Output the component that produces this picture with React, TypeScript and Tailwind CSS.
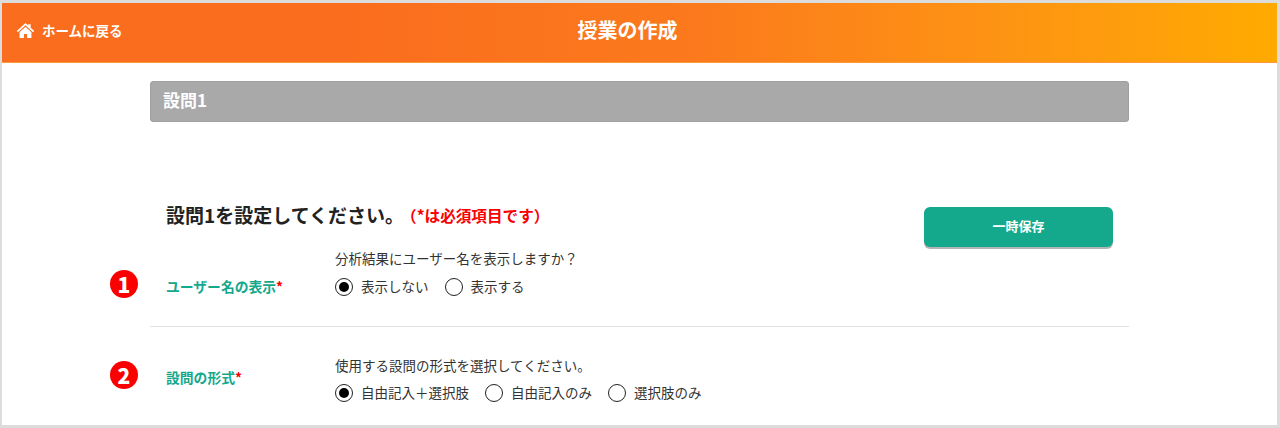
import React from "react";

const font = { fontFamily: '"Noto Sans CJK JP", "Noto Sans", sans-serif' };

function Radio({ checked, label }: { checked?: boolean; label: string }) {
  return (
    <span className="flex items-center gap-[8px]">
      <span className="flex h-[18px] w-[18px] items-center justify-center rounded-full border border-[#222] bg-white">
        {checked && <span className="h-[10px] w-[10px] rounded-full bg-black" />}
      </span>
      <span className="-mt-[2px] text-[13.5px] leading-[18px] text-[#333]">{label}</span>
    </span>
  );
}

function Row({ n, label, question, options, className, badgeTop, labelTop, radioTop }: { n: string; label: string; question: string; options: { label: string; checked?: boolean }[]; className: string; badgeTop: string; labelTop: string; radioTop: string }) {
  return (
    <div className={`flex items-start ${className}`}>
      <span className={`${badgeTop} flex h-[28px] w-[28px] shrink-0 items-center justify-center rounded-full bg-[#fa0000] text-[21px] font-black leading-none text-white`}>{n}</span>
      <span className={`${labelTop} ml-[28px] w-[170px] shrink-0 text-[13.8px] font-bold leading-[18px] text-[#14a88c]`}>
        {label}<span className="text-[#fa0000]">*</span>
      </span>
      <div className="-ml-[1px] flex flex-col">
        <p className="text-[13.5px] leading-[18px] text-[#333]">{question}</p>
        <div className={`${radioTop} flex items-center gap-[16px]`}>
          {options.map((o) => (
            <Radio key={o.label} label={o.label} checked={o.checked} />
          ))}
        </div>
      </div>
    </div>
  );
}

export default function App() {
  return (
    <div style={font} className="h-[428px] w-[1280px] overflow-hidden border-t-[3px] border-r-[3px] border-b-[3px] border-l-[2px] border-[#dcdcdc] bg-white">
      <header className="relative flex h-[60px] items-center justify-center border-b border-b-[#ff9a3c] bg-gradient-to-r from-[#fa6c1e] from-[25%] via-[#fb7a1c] via-[55%] to-[#ffaa00] pr-[24px]">
        <a className="absolute left-[14px] top-[16px] flex items-center gap-[7px] text-[13.5px] font-bold leading-[18px] text-white">
          <svg viewBox="0 0 24 24" width="19" height="19" fill="#fff" className="mt-[2px]">
            <path d="M12 2.5 1 12.6l1.5 1.6L12 5.5l9.5 8.7 1.5-1.6L18.5 8.5V4h-3v1.8z" />
            <path d="M12 7.4 4.5 14.2V21.5h5.5v-5h4v5h5.5v-7.3z" />
          </svg>
          ホームに戻る
        </a>
        <h1 className="mb-[6px] text-[20px] font-bold leading-none text-white">授業の作成</h1>
      </header>

      <main className="ml-[148px] w-[979px]">
        <div className="mt-[18px] flex h-[41px] items-center rounded-[3px] border border-[#a0a0a0] bg-[#a9a9a9] pb-[3px] pl-[12px] text-[17px] font-bold text-white">設問1</div>

        <div className="mt-[84px] flex items-start justify-between pl-[16px] pr-[16px]">
          <h2 className="mt-[-2px] flex items-baseline text-[19px] font-bold leading-[22px] text-[#222]">
            設問1を設定してください。
            <span className="-ml-[3px] -translate-y-[1px] text-[15.6px] text-[#fa0000]">（*は必須項目です）</span>
          </h2>
          <button className="mt-[1px] h-[40px] w-[189px] rounded-[6px] bg-[#14a88c] pb-[2px] text-[13px] font-bold text-white shadow-[0_2px_0_#b5b5b5]">一時保存</button>
        </div>

        <Row
          className="-ml-[40px] mt-[2px] h-[73px]"
          n="1"
          label="ユーザー名の表示"
          question="分析結果にユーザー名を表示しますか？"
          badgeTop="mt-[21px]"
          labelTop="mt-[28px]"
          radioTop="mt-[11px]"
          options={[{ label: "表示しない", checked: true }, { label: "表示する" }]}
        />
        <div className="mt-[4px] h-px bg-[#e2e2e2]" />
        <Row
          className="-ml-[40px] mt-[29px]"
          n="2"
          label="設問の形式"
          question="使用する設問の形式を選択してください。"
          badgeTop="mt-[5px]"
          labelTop="mt-[12px]"
          radioTop="mt-[10px]"
          options={[{ label: "自由記入＋選択肢", checked: true }, { label: "自由記入のみ" }, { label: "選択肢のみ" }]}
        />
      </main>
    </div>
  );
}
